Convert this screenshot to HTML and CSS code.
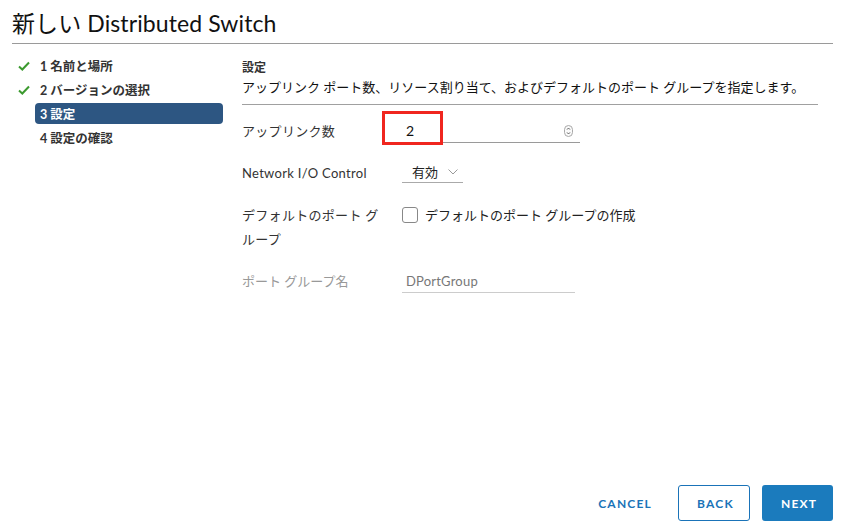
FILE: index.html
```html
<!DOCTYPE html>
<html lang="ja">
<head>
    <meta charset="UTF-8">
    <title>新しい Distributed Switch</title>
    <link rel="stylesheet" href="styles.css">
</head>
<body>
<div class="wizard">
    <h1 class="wizard-title">新しい Distributed Switch</h1>
    <div class="wizard-body">
        <ul class="steps">
            <li class="step done">
                <svg class="check" viewBox="0 0 12 10" width="12" height="10"><path d="M1 5.5 L4.3 8.5 L11 1.5" fill="none" stroke="#3c9a2f" stroke-width="2"/></svg>
                <span>1 名前と場所</span>
            </li>
            <li class="step done">
                <svg class="check" viewBox="0 0 12 10" width="12" height="10"><path d="M1 5.5 L4.3 8.5 L11 1.5" fill="none" stroke="#3c9a2f" stroke-width="2"/></svg>
                <span>2 バージョンの選択</span>
            </li>
            <li class="step active"><span>3 設定</span></li>
            <li class="step"><span>4 設定の確認</span></li>
        </ul>
        <div class="content">
            <div class="section-head">
                <div class="section-title">設定</div>
                <div class="section-desc">アップリンク ポート数、リソース割り当て、およびデフォルトのポート グループを指定します。</div>
            </div>
            <div class="form">
                <div class="row">
                    <label class="label">アップリンク数</label>
                    <div class="field number-field">
                        <span class="value">2</span>
                        <span class="spinner">
                            <svg viewBox="0 0 9 12" width="9" height="12"><rect x="0.5" y="0.5" width="8" height="11" rx="4" fill="#fafafa" stroke="#a8a8a8"/><path d="M3 4.6 L4.5 3 L6 4.6 M3 7.4 L4.5 9 L6 7.4" fill="none" stroke="#555" stroke-width="0.9"/></svg>
                        </span>
                        <span class="highlight"></span>
                    </div>
                </div>
                <div class="row">
                    <label class="label">Network I/O Control</label>
                    <div class="field select-field">
                        <span class="value">有効</span>
                        <svg class="chevron" viewBox="0 0 10 6" width="10" height="6"><path d="M0.5 0.5 L5 5 L9.5 0.5" fill="none" stroke="#9a9a9a" stroke-width="1"/></svg>
                    </div>
                </div>
                <div class="row tall">
                    <label class="label">デフォルトのポート グループ</label>
                    <div class="check-field">
                        <span class="box"></span>
                        <span>デフォルトのポート グループの作成</span>
                    </div>
                </div>
                <div class="row">
                    <label class="label disabled">ポート グループ名</label>
                    <div class="field text-field">
                        <span class="value muted">DPortGroup</span>
                    </div>
                </div>
            </div>
        </div>
    </div>
    <div class="footer">
        <button class="btn btn-link">CANCEL</button>
        <button class="btn btn-outline">BACK</button>
        <button class="btn btn-primary">NEXT</button>
    </div>
</div>
</body>
</html>
```

FILE: styles.css
```css
* {
    margin: 0;
    padding: 0;
    box-sizing: border-box;
}

body {
    font-family: Lato, "Noto Sans CJK JP", sans-serif;
    color: #222;
    background: #fff;
    width: 851px;
    height: 530px;
    overflow: hidden;
}

.wizard {
    display: flex;
    flex-direction: column;
    height: 530px;
    padding: 0 18px 9px 12px;
}

.wizard-title {
    font-size: 23px;
    font-weight: 400;
    letter-spacing: 0.1px;
    line-height: 28px;
    padding-top: 9px;
    padding-bottom: 6px;
    color: #111;
    border-bottom: 1px solid #9a9a9a;
}

.wizard-body {
    display: flex;
    flex: 1;
    padding-top: 11px;
}

.steps {
    list-style: none;
    width: 211px;
    flex-shrink: 0;
}

.step {
    display: flex;
    align-items: center;
    height: 21px;
    margin-bottom: 3px;
    padding-left: 28px;
    font-size: 12.5px;
    font-weight: 700;
    color: #333;
    position: relative;
}

.step .check {
    position: absolute;
    left: 6px;
    top: 6px;
}

.step.active {
    background: #2d5682;
    color: #fff;
    border-radius: 4px;
    margin-left: 23px;
    padding-left: 5px;
}

.content {
    flex: 1;
    padding-left: 19px;
    padding-right: 15px;
}

.section-head {
    border-bottom: 1px solid #a0a0a0;
    padding-bottom: 7px;
}

.section-title {
    font-size: 12px;
    font-weight: 700;
    line-height: 17px;
    color: #333;
    margin-top: 4px;
}

.section-desc {
    font-size: 13px;
    line-height: 20px;
    color: #111;
    margin-top: 1px;
}

.form {
    padding-top: 14px;
}

.row {
    display: flex;
    align-items: flex-start;
    margin-bottom: 18px;
}

.label {
    width: 160px;
    flex-shrink: 0;
    font-size: 13px;
    letter-spacing: 0.3px;
    line-height: 24px;
    color: #333;
    padding-right: 20px;
}

.label.disabled {
    color: #999;
    letter-spacing: 0;
}

.field {
    display: flex;
    align-items: center;
    height: 24px;
    border-bottom: 1px solid #9a9a9a;
    font-size: 13px;
    position: relative;
}

.number-field {
    width: 178px;
    justify-content: space-between;
    padding-left: 4px;
    padding-right: 7px;
}

.number-field .value {
    font-size: 14px;
    color: #111;
}

.spinner {
    display: flex;
    align-items: center;
}

.highlight {
    position: absolute;
    left: -20px;
    top: -8px;
    width: 61px;
    height: 34px;
    border: 3px solid #f0261f;
}

.select-field {
    width: 61px;
    padding-left: 10px;
    gap: 10px;
    height: 22px;
    border-bottom-color: #aaa;
}

.select-field .value {
    color: #222;
}

.check-field {
    display: flex;
    align-items: center;
    gap: 7px;
    font-size: 13px;
    line-height: 24px;
    color: #222;
}

.box {
    width: 16px;
    height: 16px;
    border: 1px solid #888;
    border-radius: 3px;
    background: #fff;
}

.text-field {
    width: 173px;
    padding-left: 4px;
    border-bottom-color: #ccc;
}

.value.muted {
    color: #777;
    letter-spacing: 0.2px;
}

.footer {
    display: flex;
    justify-content: flex-end;
    align-items: center;
    gap: 12px;
}

.btn {
    font-family: Lato, sans-serif;
    font-size: 12px;
    font-weight: 700;
    letter-spacing: 1.2px;
    height: 36px;
    padding: 0 18px;
    border-radius: 3px;
    background: none;
    border: 1px solid transparent;
    cursor: pointer;
}

.btn-link {
    color: #1a73b8;
    padding: 0 13px;
}

.btn-outline {
    border-color: #1a73b8;
    color: #1a73b8;
    width: 72px;
}

.btn-primary {
    background: #1b7bbd;
    color: #fff;
    width: 71px;
}
```
